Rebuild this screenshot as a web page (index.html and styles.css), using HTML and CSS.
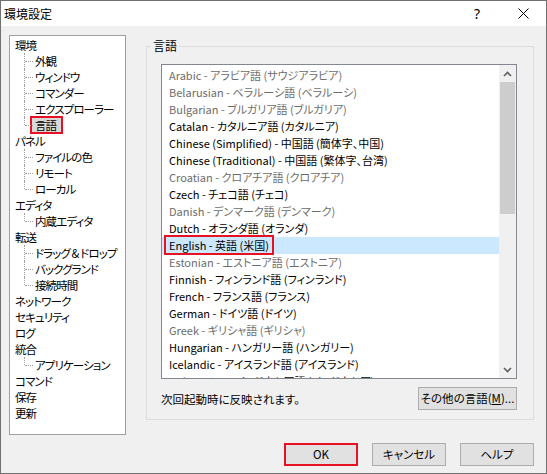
FILE: index.html
```html
<!DOCTYPE html>
<html lang="ja">
<head>
<meta charset="utf-8">
<title>環境設定</title>
<link rel="stylesheet" href="styles.css">
</head>
<body>
<div class="window">
  <div class="titlebar">
    <div class="title">環境設定</div>
    <div class="tb-btn help">?</div>
    <div class="tb-btn close">
      <svg width="11" height="11" viewBox="0 0 11 11"><path d="M0.5 0.5 L10.5 10.5 M10.5 0.5 L0.5 10.5" stroke="#000" stroke-width="1" fill="none"/></svg>
    </div>
  </div>
  <div class="content">
    <div class="main">
      <ul class="tree">
        <li><span class="node">環境</span>
          <ul class="sub">
            <li><span class="node">外観</span></li>
            <li><span class="node">ウィンドウ</span></li>
            <li><span class="node">コマンダー</span></li>
            <li><span class="node">エクスプローラー</span></li>
            <li class="last"><span class="node sel">言語</span></li>
          </ul>
        </li>
        <li><span class="node">パネル</span>
          <ul class="sub">
            <li><span class="node">ファイルの色</span></li>
            <li><span class="node">リモート</span></li>
            <li class="last"><span class="node">ローカル</span></li>
          </ul>
        </li>
        <li><span class="node">エディタ</span>
          <ul class="sub">
            <li class="last"><span class="node">内蔵エディタ</span></li>
          </ul>
        </li>
        <li><span class="node">転送</span>
          <ul class="sub">
            <li><span class="node">ドラッグ &amp; ドロップ</span></li>
            <li><span class="node">バックグランド</span></li>
            <li class="last"><span class="node">接続時間</span></li>
          </ul>
        </li>
        <li><span class="node">ネットワーク</span></li>
        <li><span class="node">セキュリティ</span></li>
        <li><span class="node">ログ</span></li>
        <li><span class="node">統合</span>
          <ul class="sub">
            <li class="last"><span class="node">アプリケーション</span></li>
          </ul>
        </li>
        <li><span class="node">コマンド</span></li>
        <li><span class="node">保存</span></li>
        <li><span class="node">更新</span></li>
      </ul>

      <fieldset class="group">
        <legend>言語</legend>
        <div class="group-inner">
          <div class="listbox">
            <ul class="items">
              <li class="dim">Arabic - アラビア語 (サウジアラビア)</li>
              <li class="dim">Belarusian - ベラルーシ語 (ベラルーシ)</li>
              <li class="dim">Bulgarian - ブルガリア語 (ブルガリア)</li>
              <li>Catalan - カタルニア語 (カタルニア)</li>
              <li>Chinese (Simplified) - 中国語 (簡体字、中国)</li>
              <li>Chinese (Traditional) - 中国語 (繁体字、台湾)</li>
              <li class="dim">Croatian - クロアチア語 (クロアチア)</li>
              <li>Czech - チェコ語 (チェコ)</li>
              <li class="dim">Danish - デンマーク語 (デンマーク)</li>
              <li>Dutch - オランダ語 (オランダ)</li>
              <li class="selected"><span class="mark">English - 英語 (米国)</span></li>
              <li class="dim">Estonian - エストニア語 (エストニア)</li>
              <li>Finnish - フィンランド語 (フィンランド)</li>
              <li>French - フランス語 (フランス)</li>
              <li>German - ドイツ語 (ドイツ)</li>
              <li class="dim">Greek - ギリシャ語 (ギリシャ)</li>
              <li>Hungarian - ハンガリー語 (ハンガリー)</li>
              <li>Icelandic - アイスランド語 (アイスランド)</li>
              <li>Indonesian - インドネシア語 (インドネシア)</li>
              <li>Italian - イタリア語 (イタリア)</li>
              <li>Japanese - 日本語 (日本)</li>
            </ul>
            <div class="scrollbar">
              <div class="arrow">
                <svg width="9" height="6" viewBox="0 0 9 6"><path d="M1 5 L4.5 1.5 L8 5" stroke="#606060" stroke-width="1.6" fill="none"/></svg>
              </div>
              <div class="track"><div class="thumb"></div></div>
              <div class="arrow">
                <svg width="9" height="6" viewBox="0 0 9 6"><path d="M1 1 L4.5 4.5 L8 1" stroke="#606060" stroke-width="1.6" fill="none"/></svg>
              </div>
            </div>
          </div>
          <div class="group-footer">
            <span class="note">次回起動時に反映されます。</span>
            <button class="btn more">その他の言語(<u>M</u>)...</button>
          </div>
        </div>
      </fieldset>
    </div>

    <div class="buttons">
      <button class="btn dlg ok">OK</button>
      <button class="btn dlg">キャンセル</button>
      <button class="btn dlg">ヘルプ</button>
    </div>
  </div>
</div>
</body>
</html>
```
FILE: styles.css
```css
html, body {
  margin: 0;
  padding: 0;
}
body {
  font-family: "Noto Sans CJK JP", sans-serif;
  font-size: 11px;
  font-feature-settings: "palt" 1;
  color: #000;
  background: #f0f0f0;
}
.window {
  width: 547px;
  height: 474px;
  box-sizing: border-box;
  border: 1px solid #707070;
  background: #f0f0f0;
  display: flex;
  flex-direction: column;
}
.titlebar {
  height: 25px;
  background: #fff;
  display: flex;
  align-items: center;
}
.title {
  flex: 1;
  padding-left: 3px;
  font-size: 12px;
  line-height: 25px;
}
.tb-btn {
  width: 46px;
  height: 25px;
  display: flex;
  align-items: center;
  justify-content: center;
}
.help {
  font-size: 14px;
  font-family: "Noto Sans", sans-serif;
}
.content {
  flex: 1;
  padding: 9px 12px 0 8px;
  display: flex;
  flex-direction: column;
}
.main {
  display: flex;
  align-items: flex-start;
}
ul {
  list-style: none;
  margin: 0;
  padding: 0;
}
.tree {
  width: 117px;
  height: 400px;
  box-sizing: border-box;
  border: 1px solid #a0a0a0;
  background: #fff;
  padding: 1px 0 0 5px;
  line-height: 16px;
  white-space: nowrap;
  font-size: 11.5px;
  letter-spacing: -0.9px;
}
.sub {
  padding-left: 20px;
}
.sub > li {
  position: relative;
}
.sub > li::before {
  content: "";
  position: absolute;
  left: -11px;
  top: 0;
  height: 16px;
  border-left: 1px dotted #a0a0a0;
}
.sub > li.last::before {
  height: 8px;
}
.sub > li::after {
  content: "";
  position: absolute;
  left: -10px;
  top: 8px;
  width: 8px;
  border-top: 1px dotted #a0a0a0;
}
.node.sel {
  display: inline-block;
  line-height: 14px;
  padding: 0 5px 0 3px;
  margin: -1px -7px -1px -5px;
  border: 2px solid #e81123;
  background: #d9d9d9;
}
.group {
  margin: 4px 0 0 20px;
  padding: 0;
  width: 388px;
  box-sizing: border-box;
  border: 1px solid #dcdcdc;
  min-width: 0;
}
.group legend {
  margin-left: 4px;
  padding: 0 2px;
  line-height: 14px;
  font-size: 12px;
}
.group-inner {
  padding: 11px 16px 9px 14px;
}
.listbox {
  height: 315px;
  box-sizing: border-box;
  border: 1px solid #828790;
  background: #fff;
  display: flex;
}
.items {
  flex: 1;
  overflow: hidden;
  padding-top: 2px;
  line-height: 17px;
  white-space: nowrap;
  font-size: 11px;
}
.items li {
  padding-left: 7px;
  height: 17px;
}
.items li.dim {
  color: #6d6d6d;
}
.items li.selected {
  background: #cce8ff;
}
.mark {
  display: inline-block;
  line-height: 16px;
  padding: 0 3px;
  margin: -2px -5px -1px -5px;
  border: 2px solid #e81123;
  vertical-align: top;
}
.scrollbar {
  width: 17px;
  background: #f0f0f0;
  display: flex;
  flex-direction: column;
}
.arrow {
  height: 17px;
  display: flex;
  align-items: center;
  justify-content: center;
}
.track {
  flex: 1;
  padding: 0 1px;
}
.thumb {
  height: 132px;
  background: #cdcdcd;
}
.group-footer {
  margin-top: 8px;
  display: flex;
  justify-content: space-between;
  align-items: center;
}
.note {
  font-size: 11.5px;
}
.btn {
  font-family: "Noto Sans CJK JP", sans-serif;
  font-feature-settings: "palt" 1;
  font-size: 11.5px;
  height: 23px;
  box-sizing: border-box;
  background: #e1e1e1;
  border: 1px solid #adadad;
  padding: 0;
  margin: 0;
  color: #000;
  line-height: 19px;
  white-space: nowrap;
}
.more {
  width: 99px;
}
.buttons {
  margin-top: 8px;
  display: flex;
  justify-content: flex-end;
  gap: 14px;
}
.dlg {
  width: 74px;
}
.ok {
  border: 2px solid #e81123;
}
```
